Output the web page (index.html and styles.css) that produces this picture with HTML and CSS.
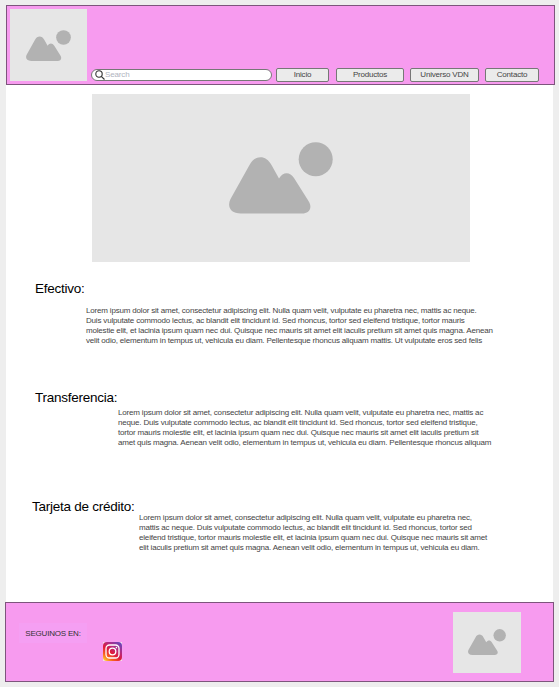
FILE: index.html
```
<!DOCTYPE html>
<html lang="es">
<head>
<meta charset="utf-8">
<title>Medios de pago</title>
<link rel="stylesheet" href="styles.css">
</head>
<body>
<div class="page">
  <header class="header">
    <div class="image logo">
      <svg class="picture" viewBox="0 0 104 72"><path d="M1.500 57 L20.500 23 C26 12.500 37 12.500 42.500 23 L50 36.500 C54 29.500 61 29.500 65 36 L79.500 59 C84 66 80 71.500 73 71.500 H12 C1 71.500 -2 64 1.500 57 Z"/><circle cx="86.700" cy="17.300" r="17"/></svg>
    </div>
    <div class="search">
      <svg class="lens" viewBox="0 0 10 10"><circle cx="4" cy="4" r="3.200"/><path d="M6.300 6.300 L9.500 9.500"/></svg>
      <span>Search</span>
    </div>
    <nav class="nav">
      <a class="b1">Inicio</a><a class="b2">Productos</a><a class="b3">Universo VDN</a><a class="b4">Contacto</a>
    </nav>
  </header>
  <main class="main">
    <div class="image hero">
      <svg class="picture" viewBox="0 0 104 72"><path d="M1.500 57 L20.500 23 C26 12.500 37 12.500 42.500 23 L50 36.500 C54 29.500 61 29.500 65 36 L79.500 59 C84 66 80 71.500 73 71.500 H12 C1 71.500 -2 64 1.500 57 Z"/><circle cx="86.700" cy="17.300" r="17"/></svg>
    </div>
    <section class="cash">
      <h2>Efectivo:</h2>
      <p>Lorem ipsum dolor sit amet, consectetur adipiscing elit. Nulla quam velit, vulputate eu pharetra nec, mattis ac neque.<br>Duis vulputate commodo lectus, ac blandit elit tincidunt id. Sed rhoncus, tortor sed eleifend tristique, tortor mauris<br>molestie elit, et lacinia ipsum quam nec dui. Quisque nec mauris sit amet elit iaculis pretium sit amet quis magna. Aenean<br>velit odio, elementum in tempus ut, vehicula eu diam. Pellentesque rhoncus aliquam mattis. Ut vulputate eros sed felis</p>
    </section>
    <section class="transfer">
      <h2>Transferencia:</h2>
      <p>Lorem ipsum dolor sit amet, consectetur adipiscing elit. Nulla quam velit, vulputate eu pharetra nec, mattis ac<br>neque. Duis vulputate commodo lectus, ac blandit elit tincidunt id. Sed rhoncus, tortor sed eleifend tristique,<br>tortor mauris molestie elit, et lacinia ipsum quam nec dui. Quisque nec mauris sit amet elit iaculis pretium sit<br>amet quis magna. Aenean velit odio, elementum in tempus ut, vehicula eu diam. Pellentesque rhoncus aliquam</p>
    </section>
    <section class="card">
      <h2>Tarjeta de crédito:</h2>
      <p>Lorem ipsum dolor sit amet, consectetur adipiscing elit. Nulla quam velit, vulputate eu pharetra nec,<br>mattis ac neque. Duis vulputate commodo lectus, ac blandit elit tincidunt id. Sed rhoncus, tortor sed<br>eleifend tristique, tortor mauris molestie elit, et lacinia ipsum quam nec dui. Quisque nec mauris sit amet<br>elit iaculis pretium sit amet quis magna. Aenean velit odio, elementum in tempus ut, vehicula eu diam.</p>
    </section>
  </main>
  <footer class="footer">
    <div class="follow">SEGUINOS EN:</div>
    <svg class="instagram" viewBox="0 0 19 19">
      <defs>
        <linearGradient id="ig" x1="0.100" y1="1" x2="0.850" y2="0"><stop offset="0" stop-color="#ffd22e"/><stop offset=".22" stop-color="#f9601f"/><stop offset=".45" stop-color="#e01a3c"/><stop offset=".7" stop-color="#b32a83"/><stop offset="1" stop-color="#6a45bd"/></linearGradient>
      </defs>
      <rect width="19" height="19" fill="#f5dced"/>
      <rect width="19" height="19" rx="4" fill="url(#ig)"/>
      <g fill="none" stroke="#fff" stroke-width="1.300"><rect x="3" y="3" width="13" height="13" rx="3.500"/><circle cx="9.500" cy="9.500" r="3.300"/></g>
      <circle cx="13.400" cy="5.600" r=".8" fill="#fff"/>
    </svg>
    <div class="image badge">
      <svg class="picture" viewBox="0 0 104 72"><path d="M1.500 57 L20.500 23 C26 12.500 37 12.500 42.500 23 L50 36.500 C54 29.500 61 29.500 65 36 L79.500 59 C84 66 80 71.500 73 71.500 H12 C1 71.500 -2 64 1.500 57 Z"/><circle cx="86.700" cy="17.300" r="17"/></svg>
    </div>
  </footer>
</div>
</body>
</html>
```
FILE: styles.css
```
* { box-sizing: border-box; }
body { margin: 0; height: 687px; overflow: hidden; background: #eee; font-family: "Liberation Sans", Arial, sans-serif; }
.page { width: 547px; height: 677px; margin: 5px 0 0 6px; display: flex; flex-direction: column; background: #fff; }
.header { width: 549px; height: 80px; flex: none; display: flex; align-items: flex-start; padding: 3px 0 0 3px; background: #f79bef; border: 1px solid #7d557c; }
.image { display: flex; align-items: center; justify-content: center; background: #e6e6e6; flex: none; }
.picture { fill: #b2b2b2; display: block; }
.logo { width: 77px; height: 72px; padding-top: 1px; }
.logo .picture { width: 45px; }
.search { width: 181px; height: 12px; margin: 60px 0 0 4px; display: flex; align-items: center; padding-left: 3px; background: #fff; border: 1px solid #777; border-radius: 6px; font-size: 8px; letter-spacing: -0.15px; line-height: 10px; color: #b0b4c0; }
.lens { width: 10px; height: 10px; fill: none; stroke: #333; stroke-width: 1.1; }
.nav { display: flex; margin: 59px 0 0 4px; }
.nav a { height: 14px; border: 1px solid #777; border-radius: 2px; background: #ebebeb; color: #444; font-size: 8px; line-height: 11px; letter-spacing: -0.2px; text-align: center; }
.nav .b1 { width: 53px; }
.nav .b2 { width: 68px; margin-left: 7px; }
.nav .b3 { width: 69px; margin-left: 6px; }
.nav .b4 { width: 54px; margin-left: 6px; }
.main { flex: none; height: 517px; padding-top: 9px; }
.hero { width: 378px; height: 168px; margin-left: 86px; }
.hero .picture { width: 104px; }
section { height: 109px; }
h2 { margin: 0; font-size: 13.5px; line-height: 16px; font-weight: 400; letter-spacing: -0.25px; color: #000; white-space: nowrap; }
p { margin: 0; font-size: 8px; line-height: 10px; letter-spacing: -0.183px; color: #444; white-space: nowrap; }
.cash { padding: 19px 0 0 29px; }
.cash p { margin: 9px 0 0 51px; }
.transfer { padding: 19px 0 0 29px; }
.transfer p { margin: 2px 0 0 83px; }
.card { padding: 19px 0 0 26px; }
.card p { margin: -2px 0 0 107px; }
.footer { width: 549px; height: 80px; margin-left: -1px; flex: none; display: flex; align-items: flex-start; background: #f79bef; border: 1px solid #7d557c; }
.follow { width: 68px; height: 20px; margin: 20px 0 0 13px; background: #f59ff3; color: #333; font-size: 8px; line-height: 21px; text-align: center; letter-spacing: -0.2px; }
.instagram { width: 19px; height: 19px; margin: 39px 0 0 16px; }
.badge { width: 68px; height: 61px; margin: 9px 0 0 331px; }
.badge .picture { width: 38px; }
```
